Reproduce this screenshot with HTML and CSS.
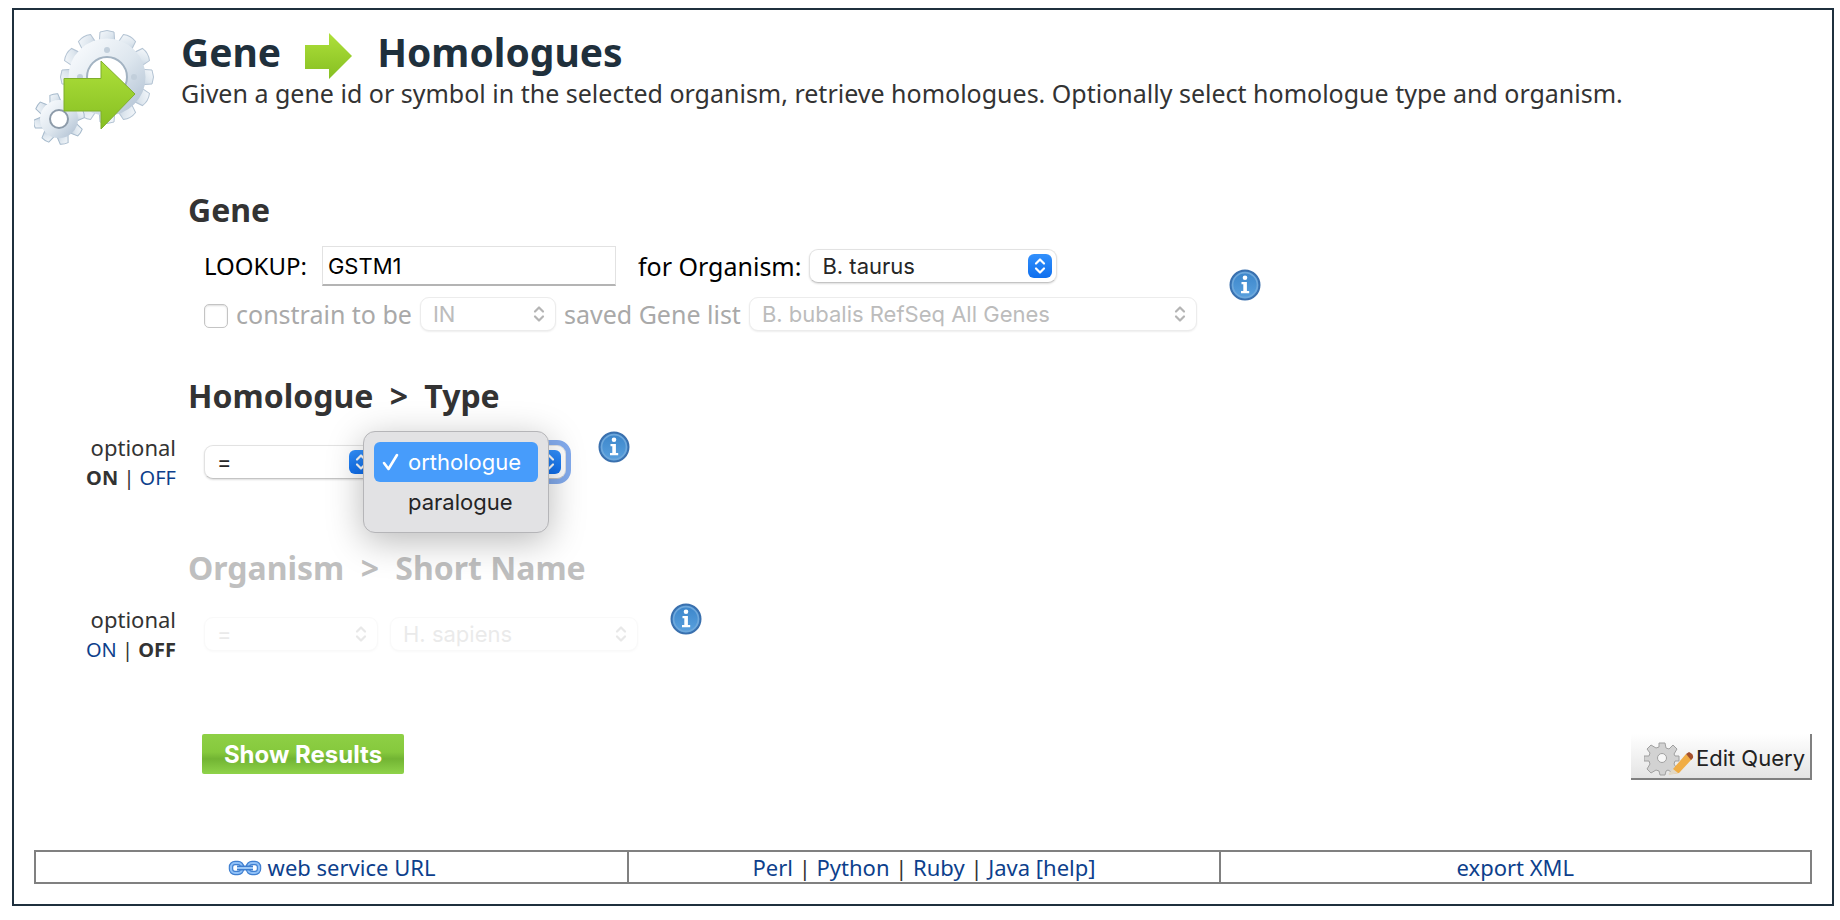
FILE: index.html
```html
<!DOCTYPE html>
<html lang="en">
<head>
<meta charset="utf-8">
<title>Gene to Homologues</title>
<link rel="stylesheet" href="styles.css">
</head>
<body>
<svg width="0" height="0" class="defs" aria-hidden="true">
  <defs>
    <linearGradient id="green" x1="0" y1="0" x2="0" y2="1"><stop offset="0" stop-color="#aee03a"/><stop offset="1" stop-color="#86bf22"/></linearGradient>
    <linearGradient id="steel" x1="0" y1="0" x2="1" y2="1"><stop offset="0" stop-color="#f6f9fc"/><stop offset=".55" stop-color="#dde6ee"/><stop offset="1" stop-color="#b9c8d8"/></linearGradient>
    <linearGradient id="blue" x1="0" y1="0" x2="0" y2="1"><stop offset="0" stop-color="#3a84c9"/><stop offset="1" stop-color="#5ba2df"/></linearGradient>
    <symbol id="updown" viewBox="0 0 24 24"><path d="M8 9.500l4-4 4 4M8 14.500l4 4 4-4" fill="none" stroke="currentColor" stroke-width="2.200" stroke-linecap="round" stroke-linejoin="round"/></symbol>
    <symbol id="info" viewBox="0 0 32 32">
      <circle cx="16" cy="16" r="14.500" fill="url(#blue)" stroke="#3a70ae" stroke-width="2"/>
      <circle cx="16" cy="16" r="12.400" fill="none" stroke="#6fa8db" stroke-width="1.600"/>
      <circle cx="16" cy="8.800" r="2.300" fill="#fff"/>
      <path d="M12.500 13h5.400v9h2.300v2.200h-8.200v-2.200h2.300v-6.800h-1.800z" fill="#fff"/>
    </symbol>
  </defs>
</svg>
<main class="template">
  <header class="intro">
    <svg class="intro-icon" viewBox="0 0 122 116" aria-hidden="true">
      <defs><path id="tooth" d="M-7-45q7-3 14 0l1 14h-16z"/><path id="cog" d="M-4-25q4-1 8 0l2 10h-12z"/></defs>
      <g transform="translate(73 47)">
        <g fill="url(#steel)" stroke="#b3c3d3">
          <use href="#tooth"/><use href="#tooth" transform="rotate(30)"/><use href="#tooth" transform="rotate(60)"/><use href="#tooth" transform="rotate(90)"/><use href="#tooth" transform="rotate(120)"/><use href="#tooth" transform="rotate(150)"/><use href="#tooth" transform="rotate(180)"/><use href="#tooth" transform="rotate(210)"/><use href="#tooth" transform="rotate(240)"/><use href="#tooth" transform="rotate(270)"/><use href="#tooth" transform="rotate(300)"/><use href="#tooth" transform="rotate(330)"/>
        </g>
        <circle r="29" fill="none" stroke="url(#steel)" stroke-width="19"/>
        <circle r="20" fill="none" stroke="#a3b3c2" stroke-width="2"/>
        <g fill="#c2cfdb"><circle cy="-27" r="3"/><circle cx="27" r="3"/><circle cx="-27" r="3"/></g>
      </g>
      <g transform="translate(25 89)">
        <g fill="url(#steel)" stroke="#a5b9cb">
          <use href="#cog" transform="rotate(-12)"/><use href="#cog" transform="rotate(33)"/><use href="#cog" transform="rotate(78)"/><use href="#cog" transform="rotate(123)"/><use href="#cog" transform="rotate(168)"/><use href="#cog" transform="rotate(213)"/><use href="#cog" transform="rotate(258)"/><use href="#cog" transform="rotate(303)"/>
        </g>
        <circle r="14" fill="none" stroke="url(#steel)" stroke-width="10"/>
        <circle r="9" fill="none" stroke="#8d9ba9" stroke-width="2"/>
      </g>
      <path d="M30 48.500h37V31l34 33-34 35V81H30z" fill="url(#green)" stroke="#7fae2c"/>
    </svg>
    <div class="intro-text">
      <h1>Gene <svg class="arrow" viewBox="0 0 48 46" role="img" aria-label="to"><path d="M0 12h24V0l23 23-23 23V36H0z" fill="url(#green)"/></svg> Homologues</h1>
      <p>Given a gene id or symbol in the selected organism, retrieve homologues. Optionally select homologue type and organism.</p>
    </div>
  </header>

  <form class="query">
    <section class="constraint">
      <h2>Gene</h2>
      <div class="fields">
        <div class="lines">
          <div class="line">
            <label class="label-lookup" for="lookup">LOOKUP:</label>
            <input class="lookup" id="lookup" type="text" value="GSTM1">
            <label class="label-large" for="organism">for Organism:</label>
            <span class="select w-organism"><select id="organism"><option>B. taurus</option></select><svg class="knob" aria-hidden="true"><use href="#updown"/></svg></span>
          </div>
          <div class="line muted">
            <input class="check" type="checkbox" id="constrain">
            <label for="constrain">constrain to be</label>
            <span class="select w-in"><select disabled aria-label="List operator"><option>IN</option></select><svg class="knob" aria-hidden="true"><use href="#updown"/></svg></span>
            <label for="saved">saved Gene list</label>
            <span class="select w-list"><select id="saved" disabled><option>B. bubalis RefSeq All Genes</option></select><svg class="knob" aria-hidden="true"><use href="#updown"/></svg></span>
          </div>
        </div>
        <svg class="info info-middle" role="img" aria-label="Information"><use href="#info"/></svg>
      </div>
    </section>

    <section class="constraint">
      <h2>Homologue <span class="sep">&gt;</span> Type</h2>
      <div class="optional">optional<div class="toggle"><b>ON</b> | <a href="#off">OFF</a></div></div>
      <div class="fields">
        <div class="line low">
          <span class="select w-op"><select aria-label="Type operator"><option>=</option></select><svg class="knob" aria-hidden="true"><use href="#updown"/></svg></span>
          <span class="select w-type open">
            <select aria-label="Homologue type"><option>orthologue</option><option>paralogue</option></select><svg class="knob" aria-hidden="true"><use href="#updown"/></svg>
            <ul class="menu" role="listbox" aria-label="Homologue type">
              <li class="chosen" role="option" aria-selected="true"><svg class="tick" viewBox="0 0 18 20" aria-hidden="true"><path d="M2 11l4.500 6L15 3" fill="none" stroke="#fff" stroke-width="2.600" stroke-linecap="round" stroke-linejoin="round"/></svg>orthologue</li>
              <li role="option" aria-selected="false">paralogue</li>
            </ul>
          </span>
        </div>
        <svg class="info" role="img" aria-label="Information"><use href="#info"/></svg>
      </div>
    </section>

    <section class="constraint off">
      <h2>Organism <span class="sep">&gt;</span> Short Name</h2>
      <div class="optional">optional<div class="toggle"><a href="#on">ON</a> | <b>OFF</b></div></div>
      <div class="fields">
        <div class="line low faint">
          <span class="select w-op"><select disabled aria-label="Name operator"><option>=</option></select><svg class="knob" aria-hidden="true"><use href="#updown"/></svg></span>
          <span class="select w-organism"><select disabled aria-label="Short name"><option>H. sapiens</option></select><svg class="knob" aria-hidden="true"><use href="#updown"/></svg></span>
        </div>
        <svg class="info" role="img" aria-label="Information"><use href="#info"/></svg>
      </div>
    </section>

    <div class="actions">
      <button class="show" type="submit">Show Results</button>
      <button class="edit" type="button">
        <svg class="edit-icon" viewBox="0 0 50 36" aria-hidden="true">
          <g transform="translate(18 18)" fill="#d2d2d2" stroke="#a0a0a0">
            <path d="M-3-15h6l1 5 3 1 4-4 4 4-3 5 1 2h4v5h-4l-1 3 3 5-4 4-5-3-2 1-1 4h-5l-1-4-3-1-5 3-4-4 3-5-1-3h-5v-5h5l1-3-3-4 4-4 5 3 3-1z"/>
            <circle r="4.500" fill="#f7f7f7"/>
          </g>
          <path d="M29 29L42 14l6 5-13 14-7 1z" fill="#f0ad45"/><path d="M42 14l3-2q5 2 4 6l-2 2z" fill="#a4502c"/><path d="M29 29l-4 4q-1 2 1 2l8-2z" fill="#e2d9c8"/>
        </svg>Edit Query</button>
    </div>
  </form>

  <nav class="exports">
    <div><svg class="chain" viewBox="0 0 34 16" aria-hidden="true"><g fill="none" stroke="#3f7fd0" stroke-width="4.500"><rect x="3" y="3" width="11" height="10" rx="4"/><rect x="20" y="3" width="11" height="10" rx="4"/></g><g fill="none" stroke="#8fc0f7" stroke-width="2.200"><rect x="3" y="3" width="11" height="10" rx="4"/><rect x="20" y="3" width="11" height="10" rx="4"/></g><path d="M9 8h16" stroke="#3f7fd0" stroke-width="5"/><path d="M9 8h16" stroke="#9cc8f7" stroke-width="2"/></svg> <a href="#url">web service URL</a></div>
    <div><a href="#perl">Perl</a> | <a href="#python">Python</a> | <a href="#ruby">Ruby</a> | <a href="#java">Java</a> <a href="#help">[help]</a></div>
    <div><a href="#xml">export XML</a></div>
  </nav>
</main>
</body>
</html>
```
FILE: styles.css
```css
* { box-sizing: border-box; }
body { margin: 8px 6px 8px 12px; background: #fff; color: #333; font: 24px/32px "Noto Sans", "Open Sans", sans-serif; }
.defs { position: absolute; }
a { color: #0d3f8c; text-decoration: none; }
h1, h2, p, ul { margin: 0; padding: 0; }
.template { border: 2px solid #1f303e; padding: 20px; }

.intro { display: flex; gap: 25px; height: 156px; }
.intro-icon { width: 122px; height: 116px; flex: none; }
h1 { display: flex; align-items: flex-start; gap: 24px; height: 46px; font-size: 39px; line-height: 44px; color: #1f303c; }
.arrow { width: 48px; height: 46px; margin-top: 3px; }
.intro-text p { font-size: 25px; line-height: 34px; }

.constraint { display: grid; grid-template-columns: 142px 1fr; column-gap: 12px; align-content: start; height: 172px; }
.constraint:first-child { height: 186px; }
h2 { grid-column: 2; font-size: 32px; line-height: 48px; }
.sep { margin: 0 8px; }
.off h2 { color: #bfbfbf; }
.optional { font-size: 22px; line-height: 30px; text-align: right; padding-top: 12px; }
.toggle { font-size: 20px; line-height: 32px; }
.fields { grid-column: 2; display: flex; align-items: flex-start; padding-left: 16px; color: #000; }
.lines { padding-top: 8px; }
.line { display: flex; align-items: center; gap: 8px; min-height: 48px; }
.low { padding-top: 25px; gap: 12px; }
.muted { color: #a9a9a9; font-size: 25px; }
.faint { opacity: .3; }
.info { width: 32px; height: 32px; margin: 11px 0 0 32px; flex: none; }
.info-middle { margin-top: 35px; }

.lookup { width: 294px; height: 40px; padding: 0 5px; margin-right: 14px; border: 1px solid #e2e2e2; border-bottom: 2px solid #b4b4b4; font: 22px "Inter", sans-serif; color: #000; }
.label-lookup { margin-right: 7px; }
.label-large { font-size: 25px; }
.check { appearance: none; width: 24px; height: 24px; margin: 4px 0 0; border: 1px solid #c4c4c4; border-radius: 5px; background: #fff; box-shadow: inset 0 1px 2px #ddd; }

.select { position: relative; display: block; }
.select select { appearance: none; display: block; width: 100%; height: 34px; padding: 0 12px; border: 1px solid #e2e2e2; border-bottom-color: #c4c4c4; border-radius: 9px; background: #fff; box-shadow: 0 1px 2px #ddd; font: 22px "Inter", sans-serif; color: #262626; opacity: 1; }
.select select:disabled { color: #bcbcbc; border-color: #ececec; box-shadow: 0 1px 2px #eee; }
.knob { position: absolute; right: 5px; top: 5px; width: 24px; height: 24px; border-radius: 6px; background: linear-gradient(#3290fc, #0f6fee); color: #fff; pointer-events: none; }
select:disabled + .knob { background: none; color: #b4b4b4; }
.w-organism { width: 248px; }
.w-in { width: 136px; }
.w-list { width: 448px; }
.w-op { width: 174px; }
.w-type { width: 176px; }
.open select { outline: 5px solid #84acee; }

.menu { position: absolute; left: -27px; top: -14px; z-index: 1; width: 186px; padding: 10px; border: 1px solid #b5b5b8; border-radius: 12px; background: #e2e2e4; box-shadow: 0 8px 36px rgba(0, 0, 0, .28); color: #242424; list-style: none; font: 22px/40px "Inter", sans-serif; }
.menu li { position: relative; height: 40px; padding-left: 34px; border-radius: 6px; }
.menu .chosen { background: #479cfb; color: #fff; }
.tick { position: absolute; left: 8px; top: 10px; width: 18px; height: 20px; }

.actions { display: flex; justify-content: space-between; align-items: flex-start; margin-top: 18px; padding-left: 168px; height: 116px; }
.show { width: 202px; height: 40px; padding: 0; border: 0; border-radius: 2px; background: linear-gradient(#8ed045, #86c93d 45%, #72b433 62%, #8fd34a); color: #fff; font: bold 24px "Inter", sans-serif; }
.edit { display: flex; align-items: center; gap: 2px; height: 46px; padding: 4px 5px 0 13px; border: solid #808080; border-width: 0 2px 2px 0; background: linear-gradient(#fff, #e4e4e4); font: 22px "Inter", sans-serif; color: #222; }
.edit-icon { width: 50px; height: 36px; }

.exports { display: grid; grid-template-columns: repeat(3, 1fr); border: 2px solid #808080; font-size: 22px; line-height: 30px; text-align: center; }
.exports div + div { border-left: 2px solid #808080; }
.chain { width: 34px; height: 16px; }
```
